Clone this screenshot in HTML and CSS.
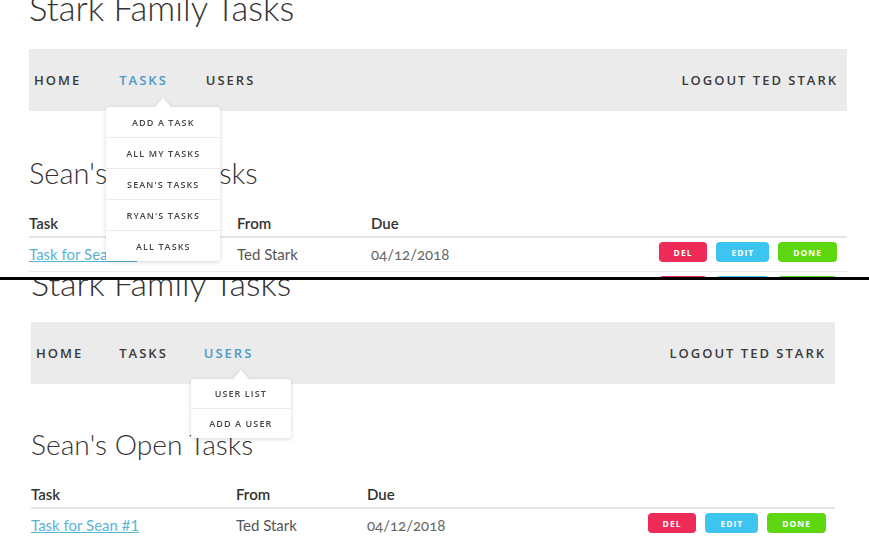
FILE: index.html
```html
<!DOCTYPE html>
<html lang="en">
<head>
<meta charset="utf-8">
<title>Stark Family Tasks</title>
<link rel="stylesheet" href="styles.css">
</head>
<body>
<div class="panel panel-a">
  <div class="page">
    <h1 class="site-title">Stark Family Tasks</h1>
    <nav class="navbar">
      <ul class="nav-menu">
        <li class="nav-item">HOME</li>
        <li class="nav-item active">TASKS
          <ul class="dropdown dropdown-tasks">
            <li class="dropdown-item">ADD A TASK</li>
            <li class="dropdown-item">ALL MY TASKS</li>
            <li class="dropdown-item">SEAN'S TASKS</li>
            <li class="dropdown-item">RYAN'S TASKS</li>
            <li class="dropdown-item">ALL TASKS</li>
          </ul>
        </li>
        <li class="nav-item">USERS</li>
      </ul>
      <div class="nav-right">LOGOUT TED STARK</div>
    </nav>
    <h2 class="section-title">Sean's Open Tasks</h2>
    <div class="task-table">
      <div class="task-row task-head">
        <div class="cell">Task</div>
        <div class="cell">From</div>
        <div class="cell">Due</div>
        <div class="cell"></div>
      </div>
      <div class="task-row task-item">
        <div class="cell"><a class="task-link" href="#">Task for Sean #1</a></div>
        <div class="cell">Ted Stark</div>
        <div class="cell date">04/12/2018</div>
        <div class="actions">
          <span class="btn btn-del">DEL</span>
          <span class="btn btn-edit">EDIT</span>
          <span class="btn btn-done">DONE</span>
        </div>
      </div>
      <div class="task-row task-item">
        <div class="cell"><a class="task-link" href="#">Task for Sean #2</a></div>
        <div class="cell">Ted Stark</div>
        <div class="cell date">04/12/2018</div>
        <div class="actions">
          <span class="btn btn-del">DEL</span>
          <span class="btn btn-edit">EDIT</span>
          <span class="btn btn-done">DONE</span>
        </div>
      </div>
    </div>
  </div>
</div>
<div class="divider"></div>
<div class="panel panel-b">
  <div class="page page-b">
    <h1 class="site-title">Stark Family Tasks</h1>
    <nav class="navbar">
      <ul class="nav-menu">
        <li class="nav-item">HOME</li>
        <li class="nav-item">TASKS</li>
        <li class="nav-item active">USERS
          <ul class="dropdown dropdown-users">
            <li class="dropdown-item">USER LIST</li>
            <li class="dropdown-item">ADD A USER</li>
          </ul>
        </li>
      </ul>
      <div class="nav-right">LOGOUT TED STARK</div>
    </nav>
    <h2 class="section-title">Sean's Open Tasks</h2>
    <div class="task-table">
      <div class="task-row task-head">
        <div class="cell">Task</div>
        <div class="cell">From</div>
        <div class="cell">Due</div>
        <div class="cell"></div>
      </div>
      <div class="task-row task-item">
        <div class="cell"><a class="task-link" href="#">Task for Sean #1</a></div>
        <div class="cell">Ted Stark</div>
        <div class="cell date">04/12/2018</div>
        <div class="actions">
          <span class="btn btn-del">DEL</span>
          <span class="btn btn-edit">EDIT</span>
          <span class="btn btn-done">DONE</span>
        </div>
      </div>
    </div>
  </div>
</div>
</body>
</html>
```
FILE: styles.css
```css
* { box-sizing: border-box; }
html, body { margin: 0; padding: 0; background: #fff; }
body { font-family: "Lato", "Liberation Sans", sans-serif; color: #333; }

.panel { overflow: hidden; position: relative; }
.panel-a { height: 277px; }
.panel-b { height: 260px; }
.divider { height: 3px; background: #000; }

.page { width: 818px; margin-left: 29px; }
.page-b { width: 804px; margin-left: 31px; }

.site-title {
  font-weight: 300;
  font-size: 34.7px;
  line-height: 36px;
  margin: -10px 0 23px;
  color: #333;
}
.page-b .site-title { margin: -15px 0 21px; font-size: 34px; }

.navbar {
  height: 62px;
  background: #ebebeb;
  display: flex;
  justify-content: space-between;
  padding: 0 9px 0 5px;
  font-family: "Open Sans", "Liberation Sans", sans-serif;
  font-size: 13px;
  font-weight: 600;
  letter-spacing: 2px;
  color: #3a3a3a;
}
.nav-menu { display: flex; list-style: none; margin: 0; padding: 0; gap: 38px; }
.page-b .nav-menu { gap: 36px; }
.nav-item { position: relative; display: flex; align-items: center; }
.nav-item.active { color: #4a9bc7; }
.nav-right { display: flex; align-items: center; }

.dropdown {
  position: absolute;
  top: 58px;
  left: -13px;
  width: 114px;
  background: #fff;
  list-style: none;
  margin: 0;
  padding: 0;
  border-radius: 3px;
  filter: drop-shadow(0 1px 2px rgba(0, 0, 0, 0.16));
  font-size: 9px;
  font-weight: 600;
  letter-spacing: 1.1px;
  color: #444;
  z-index: 2;
}
.dropdown::before {
  content: "";
  position: absolute;
  top: -9px;
  left: 50%;
  margin-left: -8px;
  border-left: 8px solid transparent;
  border-right: 8px solid transparent;
  border-bottom: 9px solid #fff;
}
.dropdown-users { width: 100px; top: 57px; left: -13px; }
.dropdown-item {
  height: 31px;
  display: flex;
  align-items: center;
  justify-content: center;
  border-top: 1px solid #ececec;
}
.dropdown-item:first-child { border-top: 0; height: 30px; }
.dropdown-users .dropdown-item { height: 30px; }
.dropdown-users .dropdown-item:first-child { height: 29px; }

.section-title {
  font-weight: 300;
  font-size: 29px;
  line-height: 36px;
  margin: 44px 0 22px;
  color: #333;
}
.page-b .section-title { margin-top: 42px; font-size: 28.2px; }

.task-row {
  display: grid;
  grid-template-columns: 208px 134px 1fr auto;
  padding-right: 10px;
}
.page-b .task-row { grid-template-columns: 205px 131px 1fr auto; padding-right: 9px; }

.task-head {
  font-weight: 600;
  font-size: 15px;
  line-height: 20px;
  padding-bottom: 3px;
  border-bottom: 2px solid #e6e6e6;
  color: #333;
}
.task-item {
  height: 34px;
  border-bottom: 1px solid #ececec;
  align-items: start;
  font-size: 15px;
  color: #555;
}
.task-item .cell { margin-top: 6px; line-height: 20px; }
.task-link { color: #5ab4d6; text-decoration: underline; }
.date { color: #666; font-variant-numeric: oldstyle-nums; }

.actions { display: flex; gap: 9px; padding-top: 4px; }
.btn {
  height: 20px;
  padding: 0 15px;
  border-radius: 4px;
  color: #fff;
  font-family: "Open Sans", "Liberation Sans", sans-serif;
  font-weight: 700;
  font-size: 8.5px;
  letter-spacing: 1px;
  display: flex;
  align-items: center;
  justify-content: center;
}
.btn-del { background: #ee2b56; }
.btn-edit { background: #3ec5ef; }
.btn-done { background: #5fd710; }
```
